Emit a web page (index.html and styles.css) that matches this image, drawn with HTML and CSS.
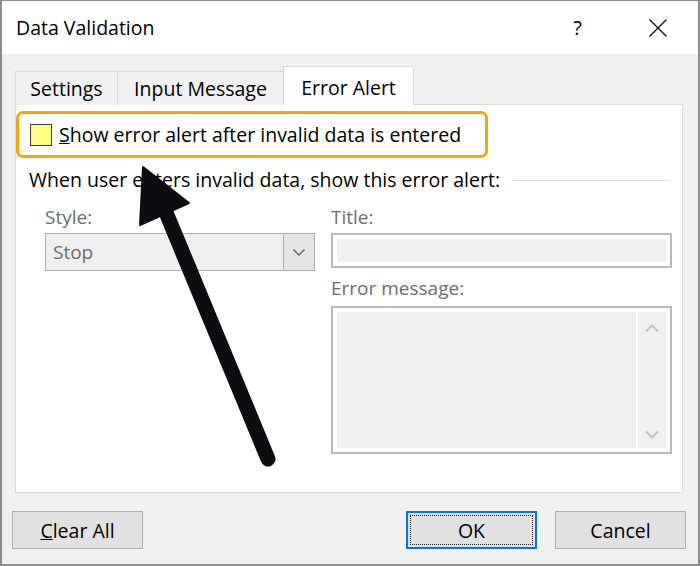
FILE: index.html
```html
<!DOCTYPE html>
<html>
<head>
<meta charset="utf-8">
<link rel="stylesheet" href="styles.css">
</head>
<body>
<div class="window">
  <div class="titlebar">
    <span class="title">Data Validation</span>
    <span class="help">?</span>
    <svg class="close" width="20" height="20" viewBox="0 0 20 20"><path d="M1.5 1.5 L18.5 18.5 M18.5 1.5 L1.5 18.5" stroke="#111" stroke-width="1.4" fill="none"/></svg>
  </div>
  <div class="body">
    <div class="tabs">
      <div class="tab t1">Settings</div>
      <div class="tab t2">Input Message</div>
      <div class="tab t3 active">Error Alert</div>
    </div>
    <div class="panel">
      <div class="highlight">
        <span class="checkbox"></span>
        <span class="cblabel"><u>S</u>how error alert after invalid data is entered</span>
      </div>
      <div class="group">
        <span>When user enters invalid data, show this error alert:</span>
        <span class="rule"></span>
      </div>
      <div class="fields">
        <div class="col left">
          <div class="label">Style:</div>
          <div class="select">
            <span class="value">Stop</span>
            <span class="dropbtn"><svg width="14" height="9" viewBox="0 0 14 9"><path d="M1.5 1.5 L7 7 L12.5 1.5" stroke="#606060" stroke-width="1.4" fill="none"/></svg></span>
          </div>
        </div>
        <div class="col right">
          <div class="label">Title:</div>
          <div class="input"><div class="fill"></div></div>
          <div class="label second">Error message:</div>
          <div class="textarea">
            <div class="fill"></div>
            <div class="scroll">
              <svg width="16" height="10" viewBox="0 0 16 10"><path d="M2 8.5 L8 2.5 L14 8.5" stroke="#c4c4c4" stroke-width="2.2" fill="none"/></svg>
              <svg width="16" height="10" viewBox="0 0 16 10"><path d="M2 1.5 L8 7.5 L14 1.5" stroke="#c4c4c4" stroke-width="2.2" fill="none"/></svg>
            </div>
          </div>
        </div>
      </div>
    </div>
    <div class="buttons">
      <div class="btn"><u>C</u>lear All</div>
      <div class="spacer"></div>
      <div class="btn default"><span class="focus">OK</span></div>
      <div class="btn">Cancel</div>
    </div>
  </div>
  <svg class="arrow" width="700" height="566" viewBox="0 0 700 566">
    <line x1="268" y1="459" x2="165" y2="210" stroke="#0d0d10" stroke-width="15" stroke-linecap="round"/>
    <polygon points="143,167 140,225 189,203" fill="#0d0d10" stroke="#0d0d10" stroke-width="2" stroke-linejoin="round"/>
  </svg>
</div>
</body>
</html>
```
FILE: styles.css
```css
* { box-sizing: border-box; }
html, body { margin: 0; padding: 0; }
body {
  width: 700px;
  height: 566px;
  font-family: "Open Sans", "Noto Sans", sans-serif;
  color: #000;
  overflow: hidden;
}
.window {
  position: relative;
  width: 700px;
  height: 566px;
  border: 1px solid #8c8c8c;
  border-width: 1px 2px 2px 2px;
  background: #f0f0f0;
  display: flex;
  flex-direction: column;
}
.titlebar {
  height: 53px;
  background: #fff;
  display: flex;
  align-items: center;
  padding-left: 14px;
  padding-right: 30px;
}
.title {
  font-size: 19.5px;
  flex: 1;
}
.help {
  font-size: 20px;
  margin-right: 66px;
  margin-top: -1px;
}
.close { display: block; }
.body {
  flex: 1;
  display: flex;
  flex-direction: column;
  padding: 13px 13px 0 12px;
}
.tabs {
  display: flex;
  align-items: flex-end;
  height: 38px;
  padding-left: 1px;
  position: relative;
  z-index: 1;
  margin-bottom: -1px;
}
.tab {
  height: 34px;
  border: 1px solid #d9d9d9;
  border-bottom: none;
  margin-right: -1px;
  font-size: 19.5px;
  line-height: 33px;
  text-align: center;
  background: #f0f0f0;
}
.t1 { width: 103px; }
.t2 { width: 167px; }
.t3 { width: 131px; }
.tab.active {
  height: 39px;
  background: #fff;
  line-height: 42px;
}
.panel {
  height: 389px;
  margin-left: 1px;
  margin-right: 2px;
  background: #fff;
  border: 1px solid #d9d9d9;
  padding-top: 6px;
}
.highlight {
  width: 472px;
  height: 47px;
  border: 3px solid #f5a50a;
  border-radius: 7px;
  display: flex;
  align-items: center;
  padding-left: 11px;
  gap: 7px;
}
.checkbox {
  width: 22px;
  height: 22px;
  border: 1px solid #3a3a3a;
  background: #ffff7f;
}
.cblabel {
  font-size: 19.5px;
  margin-top: -1px;
  white-space: nowrap;
}
.group {
  display: flex;
  align-items: center;
  margin-top: 9px;
  padding-left: 13px;
  padding-right: 12px;
  font-size: 19.5px;
  line-height: 26px;
  white-space: nowrap;
}
.rule {
  flex: 1;
  height: 1px;
  background: #dcdcdc;
  margin-left: 12px;
  margin-top: 1px;
}
.fields {
  display: flex;
  padding-left: 29px;
  margin-top: 11px;
}
.col.left { width: 270px; }
.col.right { width: 341px; margin-left: 16px; }
.label {
  font-size: 19px;
  line-height: 26px;
  color: #6d6d6d;
  margin-bottom: 3px;
}
.label.second { margin-top: 7px; margin-bottom: 5px; }
.select {
  height: 38px;
  border: 1px solid #adadad;
  background: #efefef;
  display: flex;
}
.value {
  flex: 1;
  font-size: 19px;
  color: #6d6d6d;
  line-height: 36px;
  padding-left: 7px;
}
.dropbtn {
  width: 31px;
  border-left: 1px solid #adadad;
  background: #e5e5e5;
  display: flex;
  align-items: center;
  justify-content: center;
}
.dropbtn svg { display: block; }
.input {
  height: 35px;
  border: 2px solid #b9b9b9;
  padding: 4px;
  background: #fff;
}
.fill {
  background: #f0f0f0;
  height: 100%;
}
.textarea {
  height: 148px;
  border: 2px solid #b9b9b9;
  padding: 4px;
  background: #fff;
  display: flex;
  gap: 2px;
}
.textarea .fill { flex: 1; }
.scroll {
  width: 28px;
  background: #f0f0f0;
  display: flex;
  flex-direction: column;
  align-items: center;
  justify-content: space-between;
  padding: 11px 0 8px;
}
.scroll svg { display: block; }
.buttons {
  display: flex;
  margin-top: 18px;
  margin-left: -2px;
  margin-right: -1px;
  gap: 18px;
}
.spacer { flex: 1; }
.btn {
  width: 131px;
  height: 38px;
  border: 1px solid #adadad;
  background: #e1e1e1;
  font-size: 19.5px;
  display: flex;
  align-items: center;
  justify-content: center;
}
.btn.default {
  border: 2px solid #0078d7;
  padding: 2px;
}
.focus {
  display: flex;
  align-items: center;
  justify-content: center;
  width: 100%;
  height: 100%;
  border: 1px dotted #222;
}
.arrow {
  position: absolute;
  left: -2px;
  top: -1px;
  pointer-events: none;
}
```
